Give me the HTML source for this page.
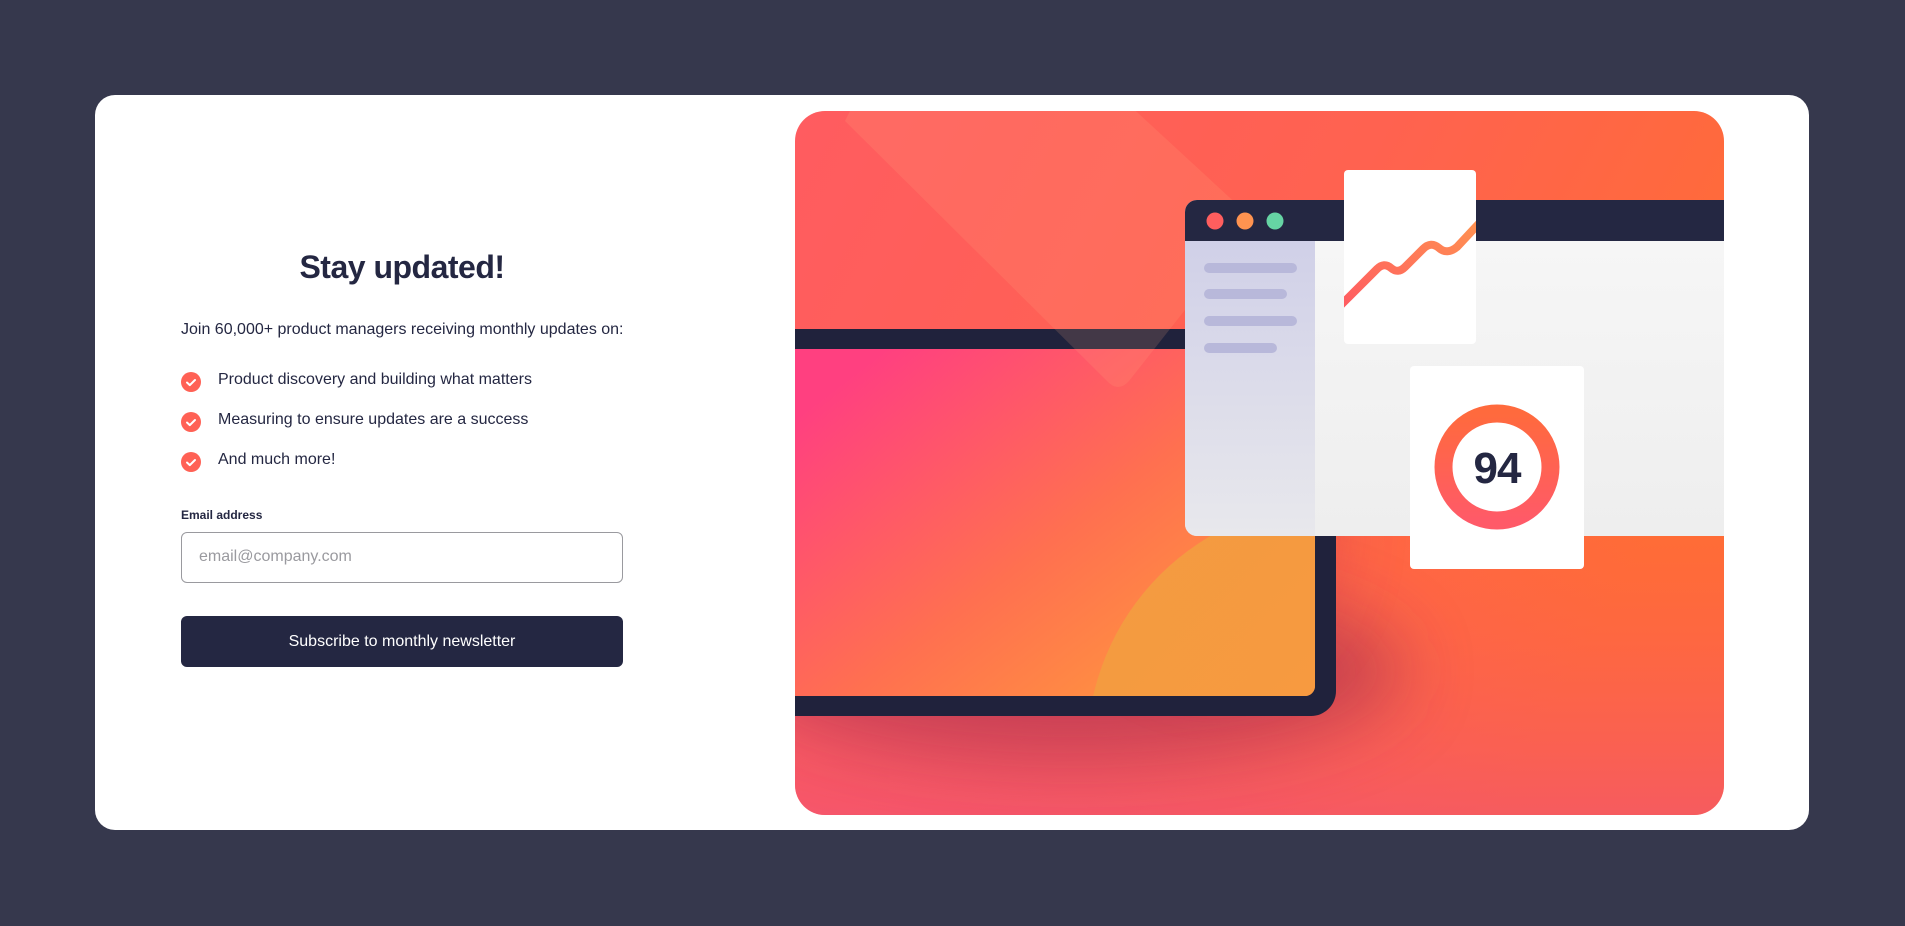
<!DOCTYPE html>
<html><head><meta charset="utf-8"><style>
*{margin:0;padding:0;box-sizing:border-box}
html,body{width:1905px;height:926px;overflow:hidden}
body{background:#36384d;font-family:"Liberation Sans",Arial,sans-serif;color:#242742;position:relative}
.card{position:absolute;left:95px;top:95px;width:1714px;height:735px;background:#fff;border-radius:20px}
.abs{position:absolute;white-space:nowrap}
h1{position:absolute;left:181px;width:442px;top:249px;text-align:center;font-size:32px;font-weight:bold;letter-spacing:-0.5px}
.p{left:181px;top:321px;font-size:16px}
.li{left:218px;font-size:16px}
.ic{position:absolute;left:181px;width:20px;height:20px;border-radius:50%;background:#ff6155}
.lab{left:181px;top:508px;font-size:12px;font-weight:bold}
.inp{position:absolute;left:181px;top:532px;width:442px;height:51px;border:1px solid #9a9a9f;border-radius:6px;font-size:16px;color:#9a9a9f;padding:15px 0 0 17px}
.btn{position:absolute;left:181px;top:616px;width:442px;height:51px;background:#242742;border-radius:6px;color:#fff;font-size:16px;text-align:center;line-height:51px}
.panel{position:absolute;left:795px;top:111px;width:929px;height:704px;border-radius:30px;overflow:hidden}
</style></head><body>
<div class="card"></div>
<h1>Stay updated!</h1>
<div class="abs p">Join 60,000+ product managers receiving monthly updates on:</div>
<div class="ic" style="top:372px"><svg width="20" height="20"><path d="M6 10.5l2.8 2.6L14 8" stroke="#fff" stroke-width="2" fill="none" stroke-linecap="round" stroke-linejoin="round"/></svg></div>
<div class="abs li" style="top:371px">Product discovery and building what matters</div>
<div class="ic" style="top:412px"><svg width="20" height="20"><path d="M6 10.5l2.8 2.6L14 8" stroke="#fff" stroke-width="2" fill="none" stroke-linecap="round" stroke-linejoin="round"/></svg></div>
<div class="abs li" style="top:411px">Measuring to ensure updates are a success</div>
<div class="ic" style="top:452px"><svg width="20" height="20"><path d="M6 10.5l2.8 2.6L14 8" stroke="#fff" stroke-width="2" fill="none" stroke-linecap="round" stroke-linejoin="round"/></svg></div>
<div class="abs li" style="top:451px">And much more!</div>
<div class="abs lab">Email address</div>
<div class="inp">email@company.com</div>
<div class="btn">Subscribe to monthly newsletter</div>
<div class="panel">
<svg width="929" height="704" viewBox="0 0 929 704">
<defs>
<linearGradient id="bg" x1="0" y1="0" x2="1" y2="0.4">
<stop offset="0" stop-color="#ff5c60"/><stop offset="0.55" stop-color="#ff6250"/><stop offset="1" stop-color="#ff6c36"/></linearGradient>
<linearGradient id="bot" x1="0" y1="0" x2="0" y2="1">
<stop offset="0" stop-color="#ff5a5a" stop-opacity="0"/><stop offset="1" stop-color="#f0507a" stop-opacity="0.6"/></linearGradient>
<linearGradient id="scr" x1="0" y1="0" x2="1" y2="0.8">
<stop offset="0.15" stop-color="#ff4080"/><stop offset="0.6" stop-color="#ff7050"/><stop offset="1" stop-color="#ff9a3c"/></linearGradient>
<linearGradient id="orb" x1="0" y1="0" x2="1" y2="1">
<stop offset="0" stop-color="#f0a040"/><stop offset="1" stop-color="#ff9040"/></linearGradient>
<linearGradient id="side" x1="0" y1="0" x2="0" y2="1"><stop offset="0" stop-color="#d0d0e8"/><stop offset="1" stop-color="#e8e8ec"/></linearGradient>
<linearGradient id="main" x1="0" y1="0" x2="0" y2="1"><stop offset="0" stop-color="#f7f7f7"/><stop offset="1" stop-color="#eeeeee"/></linearGradient>
<linearGradient id="ring" x1="0" y1="0" x2="0" y2="1"><stop offset="0" stop-color="#ff6a3d"/><stop offset="1" stop-color="#ff5a68"/></linearGradient>
<linearGradient id="line" x1="0" y1="1" x2="1" y2="0"><stop offset="0" stop-color="#ff5a62"/><stop offset="1" stop-color="#ff9550"/></linearGradient>
<filter id="bl" x="-50%" y="-50%" width="200%" height="200%"><feGaussianBlur stdDeviation="35"/></filter>
<clipPath id="sc"><rect x="-50" y="238" width="570" height="347" rx="10"/></clipPath>
<clipPath id="cc"><rect x="549" y="59" width="132" height="174" rx="4"/></clipPath>
</defs>
<rect width="929" height="704" fill="url(#bg)"/>
<rect y="420" width="929" height="284" fill="url(#bot)"/>
<ellipse cx="280" cy="560" rx="330" ry="90" fill="#a02a50" opacity="0.55" filter="url(#bl)"/>
<ellipse cx="420" cy="420" rx="120" ry="140" fill="#c03050" opacity="0.35" filter="url(#bl)"/>
<rect x="-50" y="218" width="591" height="387" rx="25" fill="#20223c"/>
<rect x="-50" y="238" width="570" height="347" rx="10" fill="url(#scr)"/>
<g clip-path="url(#sc)"><circle cx="541" cy="640" r="249" fill="url(#orb)" opacity="0.9"/></g>
<path d="M50 10 L312 270 Q323 282 334 270 L460 110 L330 -10 L60 -10 Z" fill="#ffb080" opacity="0.16"/>
<path d="M402 89 H929 V425 H402 a12 12 0 0 1 -12 -12 V101 a12 12 0 0 1 12 -12z" fill="url(#main)"/>
<path d="M402 89 H929 V130 H390 V101 a12 12 0 0 1 12 -12z" fill="#242742"/>
<path d="M390 130 H520 V425 H402 a12 12 0 0 1 -12 -12z" fill="url(#side)"/>
<circle cx="420" cy="110" r="8.5" fill="#ff5e5e"/>
<circle cx="450" cy="110" r="8.5" fill="#ff9350"/>
<circle cx="480" cy="110" r="8.5" fill="#66d4a4"/>
<g stroke="#b8b8da" stroke-width="10" stroke-linecap="round">
<line x1="414" y1="157" x2="497" y2="157"/><line x1="414" y1="183" x2="487" y2="183"/>
<line x1="414" y1="210" x2="497" y2="210"/><line x1="414" y1="237" x2="477" y2="237"/></g>
<rect x="549" y="59" width="132" height="174" rx="4" fill="#fff"/>
<g clip-path="url(#cc)"><path d="M543 197 L582 158 Q589 151 596 157 Q603 163 610 156 L628 138 Q636 130 644 137 Q652 144 662 136 L690 106" stroke="url(#line)" stroke-width="8" fill="none" stroke-linejoin="round"/></g>
<rect x="615" y="255" width="174" height="203" rx="4" fill="#fff"/>
<circle cx="702" cy="356" r="53.5" fill="none" stroke="url(#ring)" stroke-width="18"/>
<text x="702" y="372" text-anchor="middle" font-family="Liberation Sans,Arial,sans-serif" font-weight="bold" font-size="44" fill="#242742" letter-spacing="-1">94</text>
</svg>
</div>
</body></html>
